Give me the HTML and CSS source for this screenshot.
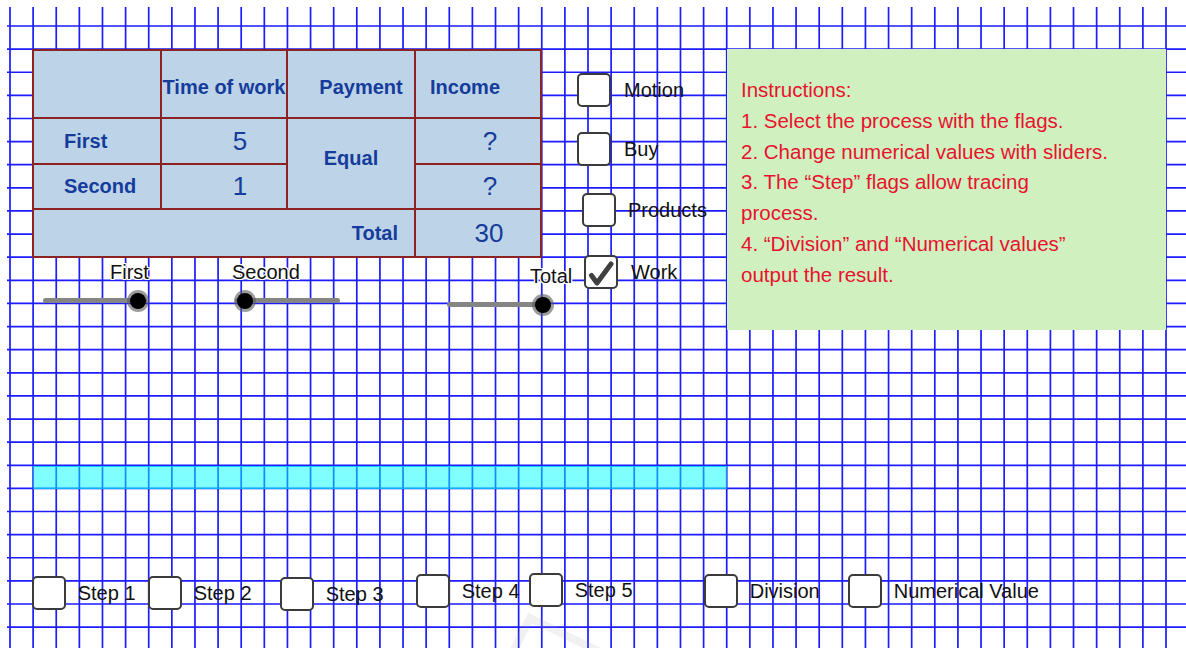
FILE: index.html
```html
<!DOCTYPE html>
<html lang="en">
<head>
<meta charset="utf-8">
<title>Work and income</title>
<link rel="stylesheet" href="styles.css">
</head>
<body>
<div class="canvas">
  <svg class="grid" width="1179" height="641" viewBox="0 0 1179 641" aria-hidden="true">
    <path d="M3 0V641M26.12 0V641M49.24 0V641M72.36 0V641M95.48 0V641M118.6 0V641M141.72 0V641M164.84 0V641M187.96 0V641M211.08 0V641M234.2 0V641M257.32 0V641M280.44 0V641M303.56 0V641M326.68 0V641M349.8 0V641M372.92 0V641M396.04 0V641M419.16 0V641M442.28 0V641M465.4 0V641M488.52 0V641M511.64 0V641M534.76 0V641M557.88 0V641M581 0V641M604.12 0V641M627.24 0V641M650.36 0V641M673.48 0V641M696.6 0V641M719.72 0V641M742.84 0V641M765.96 0V641M789.08 0V641M812.2 0V641M835.32 0V641M858.44 0V641M881.56 0V641M904.68 0V641M927.8 0V641M950.92 0V641M974.04 0V641M997.16 0V641M1020.28 0V641M1043.4 0V641M1066.52 0V641M1089.64 0V641M1112.76 0V641M1135.88 0V641M1159 0V641"/>
    <path d="M0 19H1179M0 42.12H1179M0 65.24H1179M0 88.36H1179M0 111.48H1179M0 134.6H1179M0 157.72H1179M0 180.84H1179M0 203.96H1179M0 227.08H1179M0 250.2H1179M0 273.32H1179M0 296.44H1179M0 319.56H1179M0 342.68H1179M0 365.8H1179M0 388.92H1179M0 412.04H1179M0 435.16H1179M0 458.28H1179M0 481.4H1179M0 504.52H1179M0 527.64H1179M0 550.76H1179M0 573.88H1179M0 597H1179M0 620.12H1179"/>
  </svg>

  <div class="top">
    <div class="left">
      <table class="calc">
        <colgroup>
          <col class="col-a"><col class="col-b"><col class="col-c"><col class="col-d">
        </colgroup>
        <tr class="r-head">
          <td></td>
          <td class="lbl head head-time">Time of work</td>
          <td class="lbl head head-pay">Payment</td>
          <td class="lbl head head-inc">Income</td>
        </tr>
        <tr class="r-first">
          <td class="lbl row-name">First</td>
          <td class="num val">5</td>
          <td class="lbl equal" rowspan="2">Equal</td>
          <td class="num q">?</td>
        </tr>
        <tr class="r-second">
          <td class="lbl row-name">Second</td>
          <td class="num val">1</td>
          <td class="num q">?</td>
        </tr>
        <tr class="r-total">
          <td class="lbl total-name" colspan="3">Total</td>
          <td class="num total-val">30</td>
        </tr>
      </table>

      <div class="sliders">
        <div class="slider slider-first">
          <div class="slider-label">First</div>
          <div class="track"><span class="knob" style="left:91%"></span></div>
        </div>
        <div class="slider slider-second">
          <div class="slider-label">Second</div>
          <div class="track"><span class="knob" style="left:9.5%"></span></div>
        </div>
        <div class="slider slider-total">
          <div class="slider-label">Total</div>
          <div class="track"><span class="knob" style="left:93%"></span></div>
        </div>
      </div>
    </div>

    <div class="flags">
      <div class="flag flag-motion"><span class="box"></span><span>Motion</span></div>
      <div class="flag flag-buy"><span class="box"></span><span>Buy</span></div>
      <div class="flag flag-products"><span class="box"></span><span>Products</span></div>
      <div class="flag flag-work">
        <span class="box">
          <svg class="tick" width="30" height="30" viewBox="0 0 30 30"><path d="M5.5 18.5 L11 26 L25 7"/></svg>
        </span>
        <span>Work</span>
      </div>
    </div>

    <div class="instructions">
      <div>Instructions:</div>
      <div>1. Select the process with the flags.</div>
      <div>2. Change numerical values with sliders.</div>
      <div>3. The “Step” flags allow tracing</div>
      <div>process.</div>
      <div>4. “Division” and “Numerical values”</div>
      <div>output the result.</div>
    </div>
  </div>

  <div class="bar"></div>

  <div class="steps">
    <div class="flag step step-1"><span class="box"></span><span>Step 1</span></div>
    <div class="flag step step-2"><span class="box"></span><span>Step 2</span></div>
    <div class="flag step step-3"><span class="box"></span><span>Step 3</span></div>
    <div class="flag step step-4"><span class="box"></span><span>Step 4</span></div>
    <div class="flag step step-5"><span class="box"></span><span>Step 5</span></div>
    <div class="flag step step-div"><span class="box"></span><span>Division</span></div>
    <div class="flag step step-num"><span class="box"></span><span>Numerical Value</span></div>
  </div>

  <svg class="mark" width="110" height="40" viewBox="0 0 110 40">
    <polyline points="12,42 30,6 104,42"/>
  </svg>
</div>
</body>
</html>
```

FILE: styles.css
```css
body {
  margin: 0;
  background: #fff;
  font-family: "Liberation Sans", Arial, sans-serif;
}

/* drawing area; the squared paper is an svg layer under the widgets */
.canvas {
  position: relative;
  z-index: 0;
  margin: 7px 0 0 7px;
  height: 641px;
  overflow: hidden;
  background: #fff;
}
.grid {
  position: absolute;
  left: 0;
  top: 0;
  z-index: -1;
}
.grid path {
  fill: none;
  stroke: #1c1cff;
  stroke-width: 1.7;
}

.top {
  display: flex;
  align-items: flex-start;
  padding-top: 42px;
}

.left {
  flex: none;
  margin-left: 26px;
  width: 508px;
}

/* table of work / payment / income */
.calc {
  margin-left: -1px;
  width: 510px;
  border-collapse: separate;
  border-spacing: 0;
  table-layout: fixed;
  border-top: 2px solid #8d2222;
  border-left: 2px solid #8d2222;
  background: #bdd3e7;
  color: #163c9b;
}
.col-a { width: 128px; }
.col-b { width: 126px; }
.col-c { width: 128px; }
.col-d { width: 126px; }

.calc td {
  border-right: 2px solid #8d2222;
  border-bottom: 2px solid #8d2222;
  padding: 0;
  white-space: nowrap;
  vertical-align: middle;
}
.r-head { height: 68px; }
.r-first { height: 46px; }
.r-second { height: 45px; }
.r-total { height: 48px; }

.lbl { font-weight: bold; font-size: 20px; }
.num { font-size: 26px; }

.calc .head { padding-top: 6px; }
.calc .head-time { text-align: center; }
.calc .head-pay { text-align: center; padding-left: 20px; }
.calc .head-inc { text-align: left; padding-left: 14px; }
.calc .row-name { padding-left: 30px; }
.calc .val { text-align: center; padding-left: 32px; }
.calc .equal { text-align: center; padding-bottom: 10px; }
.calc .q { text-align: center; padding-left: 24px; }
.calc .total-name { text-align: right; padding-right: 16px; }
.calc .total-val { text-align: center; padding-left: 22px; }

/* sliders */
.sliders {
  display: flex;
  align-items: flex-start;
  margin-top: 3px;
}
.slider { flex: none; }
.slider-first { margin-left: 10px; width: 104px; }
.slider-second { margin-left: 88px; width: 105px; }
.slider-total { margin-left: 107px; width: 103px; margin-top: 4px; }

.slider-label {
  font-size: 20px;
  line-height: 23px;
  color: #111;
  white-space: nowrap;
  text-shadow: 1px 0 #fff, -1px 0 #fff, 0 1px #fff, 0 -1px #fff,
               1px 1px #fff, -1px -1px #fff, 1px -1px #fff, -1px 1px #fff;
}
.slider-first .slider-label { margin-left: 67px; }
.slider-second .slider-label { margin-left: -3px; }
.slider-total .slider-label { margin-left: 83px; }

.track {
  position: relative;
  height: 5px;
  margin-top: 14px;
  border-radius: 3px;
  background: #858585;
}
.knob {
  position: absolute;
  top: 50%;
  width: 16px;
  height: 16px;
  margin: -8px 0 0 -8px;
  border-radius: 50%;
  background: #000;
  box-shadow: 0 0 0 3px rgba(90, 90, 90, 0.6);
}

/* check boxes */
.flags {
  flex: none;
  margin-left: 36px;
  width: 150px;
  padding-top: 24px;
}
.flag {
  display: flex;
  align-items: center;
  gap: 13px;
  font-size: 20px;
  line-height: 23px;
  color: #111;
  white-space: nowrap;
}
.flag-buy { margin-top: 25px; }
.flag-products { margin-top: 27px; margin-left: 5px; gap: 12px; }
.flag-work { margin-top: 28px; margin-left: 7px; }

.box {
  flex: none;
  display: flex;
  align-items: center;
  justify-content: center;
  width: 34px;
  height: 34px;
  box-sizing: border-box;
  border: 2px solid #3b3b3b;
  border-radius: 5px;
  background: #fff;
}
.tick path {
  fill: none;
  stroke: #404040;
  stroke-width: 5;
  stroke-linecap: round;
  stroke-linejoin: round;
}

/* instructions panel */
.instructions {
  flex: none;
  width: 439px;
  height: 281px;
  box-sizing: border-box;
  padding: 26px 0 0 14px;
  background: #d0f0c0;
  color: #e8122e;
  font-size: 20.5px;
  line-height: 30.8px;
}

/* highlighted strip */
.bar {
  margin: 136px 0 0 26px;
  width: 694px;
  height: 23px;
  box-sizing: border-box;
  background: rgba(0, 255, 255, 0.5);
  border-top: 1.5px solid rgba(0, 205, 255, 0.85);
  border-bottom: 1.5px solid rgba(0, 205, 255, 0.6);
}

/* step flags along the bottom */
.steps {
  display: grid;
  grid-template-columns: 116px 132px 136px 113px 175px 144px auto;
  align-items: start;
  margin: 85px 0 0 24.7px;
}
.step { gap: 12px; }
.step-1, .step-2 { margin-top: 2px; }
.step-3 { margin-top: 3px; }
.step-5 { margin-top: -1px; }

/* faint logo in the lower middle */
.mark {
  position: absolute;
  left: 493px;
  top: 605px;
}
.mark polyline {
  fill: none;
  stroke: rgba(150, 150, 150, 0.13);
  stroke-width: 8;
}
```
